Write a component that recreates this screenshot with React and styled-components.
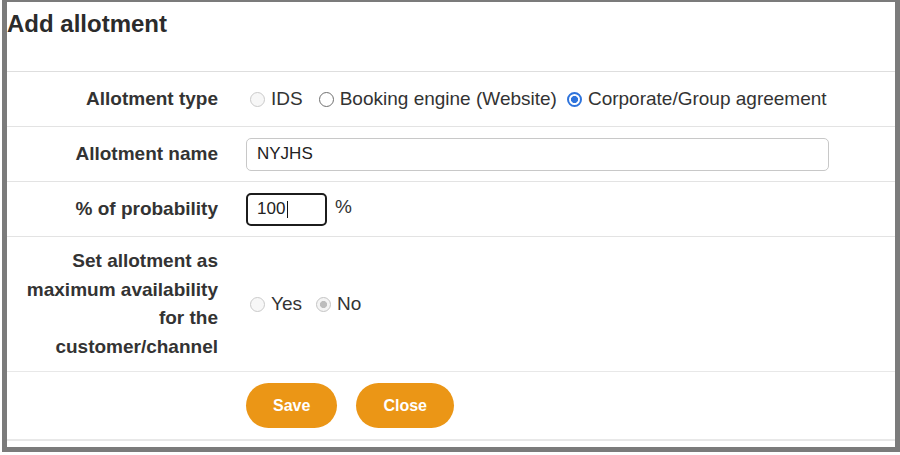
import React from "react";
import styled, { createGlobalStyle } from "styled-components";

const GlobalStyle = createGlobalStyle`
  html, body {
    margin: 0;
    padding: 0;
    background: #ffffff;
  }
  body {
    font-family: "Liberation Sans", Arial, sans-serif;
    color: #333333;
  }
`;

function RadioOption({ label, checked, disabled, space }) {
  return (
    <Option $space={space}>
      <Radio type="radio" checked={checked} disabled={disabled} readOnly />
      <span>{label}</span>
    </Option>
  );
}

function App() {
  return (
    <>
      <GlobalStyle />
      <Frame>
        <Header>
          <Title>Add allotment</Title>
        </Header>

        <Row>
          <Label>Allotment type</Label>
          <Field>
            <RadioOption label="IDS" disabled space={12} />
            <RadioOption label="Booking engine (Website)" space={6} />
            <RadioOption label="Corporate/Group agreement" checked />
          </Field>
        </Row>

        <Row>
          <Label>Allotment name</Label>
          <Field>
            <TextInput type="text" defaultValue="NYJHS" />
          </Field>
        </Row>

        <Row>
          <Label>% of probability</Label>
          <Field>
            <InputWrap>
              <SmallInput type="text" defaultValue="100" />
              <Caret />
            </InputWrap>
            <Unit>%</Unit>
          </Field>
        </Row>

        <Row>
          <Label>
            Set allotment as
            <br />
            maximum availability
            <br />
            for the
            <br />
            customer/channel
          </Label>
          <Field>
            <RadioOption label="Yes" disabled space={10} />
            <RadioOption label="No" checked disabled />
          </Field>
        </Row>

        <ButtonRow>
          <span />
          <Buttons>
            <Button>Save</Button>
            <Button>Close</Button>
          </Buttons>
        </ButtonRow>
      </Frame>
    </>
  );
}

const Frame = styled.div`
  box-sizing: border-box;
  margin-left: 2px;
  width: 898px;
  height: 452px;
  border: 5px solid #7b7b7b;
  border-top-width: 2px;
  background: #ffffff;
  display: flex;
  flex-direction: column;
`;

const Header = styled.div`
  height: 70px;
  border-bottom: 1px solid #dedede;
  padding-top: 8px;
  box-sizing: border-box;
`;

const Title = styled.h1`
  margin: 0;
  font-size: 24px;
  font-weight: 700;
  line-height: 27px;
  color: #2b2b2b;
`;

const Row = styled.div`
  display: grid;
  grid-template-columns: 239px 1fr;
  align-items: center;
  padding: 10px 0;
  border-bottom: 1px solid #e3e3e3;
`;

const Label = styled.div`
  text-align: right;
  padding-right: 28px;
  font-size: 19px;
  font-weight: 700;
  line-height: 28.5px;
  color: #333333;
`;

const Field = styled.div`
  display: flex;
  align-items: center;
  min-height: 34px;
  font-size: 19px;
  color: #333333;
`;

const Option = styled.label`
  display: flex;
  align-items: center;
  gap: 6px;
  margin-right: ${(p) => (p.$space ? `${p.$space}px` : "0")};
`;

const Radio = styled.input`
  appearance: none;
  margin: 0 0 0 4px;
  width: 15px;
  height: 15px;
  box-sizing: border-box;
  border-radius: 50%;
  border: 1px solid #6f6f6f;
  background: #ffffff;

  &:disabled {
    border-color: #cacaca;
    background: #f7f7f7;
  }
  &:checked {
    border: 2px solid #2f74dc;
    background: radial-gradient(circle, #2f74dc 0 3.3px, #ffffff 3.8px);
  }
  &:checked:disabled {
    border: 1.5px solid #c4c4c4;
    background: radial-gradient(circle, #bdbdbd 0 3.3px, #f4f4f4 3.8px);
  }
`;

const TextInput = styled.input`
  box-sizing: border-box;
  width: 583px;
  height: 33px;
  padding: 0 10px;
  border: 1px solid #c8c8c8;
  border-radius: 5px;
  font-family: "Liberation Sans", Arial, sans-serif;
  font-size: 17px;
  color: #222222;
  outline: none;
`;

const InputWrap = styled.div`
  position: relative;
`;

const SmallInput = styled(TextInput)`
  width: 81px;
  border: 2px solid #1c1c1c;
  padding: 0 9px;
`;

const Caret = styled.span`
  position: absolute;
  left: 41px;
  top: 8px;
  width: 1px;
  height: 17px;
  background: #111111;
`;

const Unit = styled.span`
  margin-left: 8px;
  margin-top: -4px;
`;

const ButtonRow = styled(Row)`
  padding: 11px 0;
  border-top: 1px solid #e8e8e8;
  border-bottom: 2px solid #e8e8e8;
  margin-top: -1px;
`;

const Buttons = styled.div`
  display: flex;
  gap: 19px;
`;

const Button = styled.button`
  height: 45px;
  padding: 0 27px;
  border: none;
  border-radius: 23px;
  background: #eb9616;
  color: #ffffff;
  font-family: "Liberation Sans", Arial, sans-serif;
  font-size: 16px;
  font-weight: 700;
`;

export default App;
